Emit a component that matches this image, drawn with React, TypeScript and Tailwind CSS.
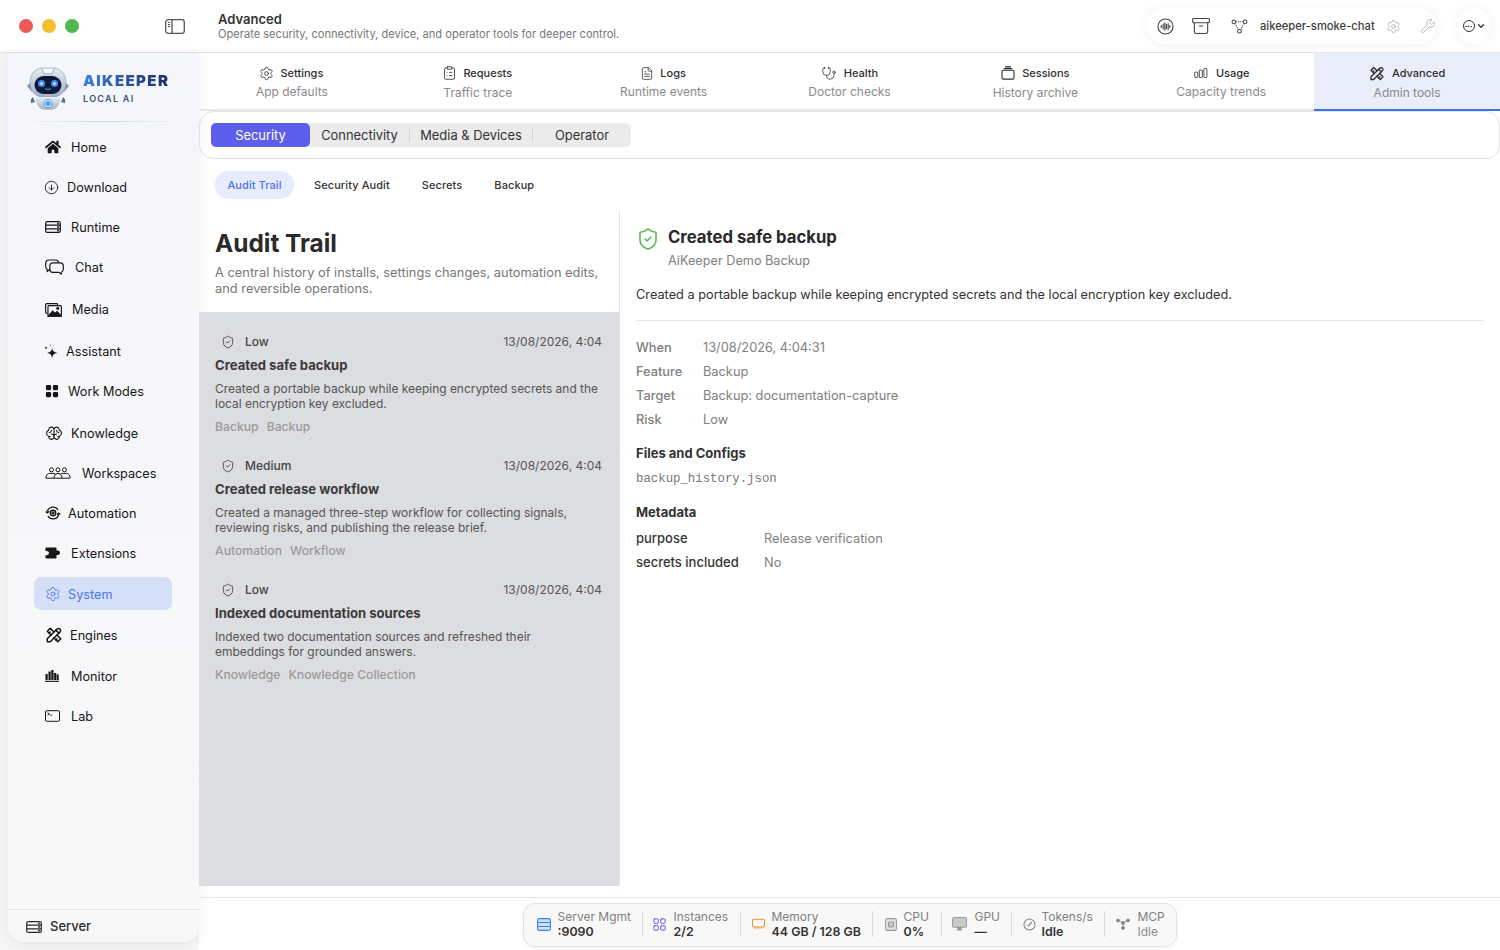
import React from 'react';
import {
  Settings,
  ClipboardList,
  FileText,
  Stethoscope,
  CircleArrowDown,
  ShieldCheck,
  Archive,
  Wrench,
  ChevronDown,
  Ellipsis,
  LayoutGrid,
} from 'lucide-react';
import { FaHome } from 'react-icons/fa';
import { BsGridFill } from 'react-icons/bs';
import { TbTools } from 'react-icons/tb';
import { PiBrain } from 'react-icons/pi';

type SvgProps = { className?: string };

const ServerIcon = ({ className }: SvgProps) => (
  <svg viewBox="0 0 16 12" className={className} fill="none" stroke="currentColor" strokeWidth="1.2">
    <rect x="0.7" y="0.7" width="14.6" height="10.6" rx="1.6" />
    <path d="M0.7 4.2h14.6M0.7 7.8h14.6" />
    <circle cx="13" cy="2.5" r="0.4" />
    <circle cx="13" cy="6" r="0.4" />
    <circle cx="13" cy="9.6" r="0.4" />
  </svg>
);

const ServerBlueIcon = ({ className }: SvgProps) => (
  <svg viewBox="0 0 14 13" className={className} fill="#cfe0fd" stroke="#3b82f6" strokeWidth="1.1">
    <rect x="0.6" y="0.6" width="12.8" height="11.8" rx="1.6" />
    <path d="M0.6 4.5h12.800M0.6 8.500h12.800" />
  </svg>
);

const ChatIcon = ({ className }: SvgProps) => (
  <svg viewBox="0 0 19 16" className={className} fill="none" stroke="currentColor" strokeWidth="1.200" strokeLinejoin="round">
    <path d="M5.500 10.800H4.200l-2 1.700v-2.300C1.100 9.700.7 8.800.7 7.600V4.300C.7 2.400 2 1 4 1h6.400c1.700 0 2.900 1 3.200 2.600" />
    <path d="M7.800 3.800h7.400c1.800 0 3.100 1.300 3.100 3v3.400c0 1.400-.7 2.500-2 3v2l-2.300-1.800H7.800c-1.800 0-3-1.300-3-3V6.800c0-1.700 1.200-3 3-3z" />
  </svg>
);

const MediaIcon = ({ className }: SvgProps) => (
  <svg viewBox="0 0 16 14" className={className} fill="none" stroke="currentColor" strokeWidth="1.1">
    <path d="M2.500 10.500H1.600a1 1 0 0 1-1-1.100V2.400a1 1 0 0 1 1-1h9.400a1 1 0 0 1 1 1v.7" />
    <rect x="2.800" y="3.300" width="12.600" height="10" rx="1" />
    <path d="M3 13.200 7.200 8.600l2.200 2.100 2-1.700 4 4.200z" fill="currentColor" />
    <circle cx="12" cy="5.800" r="0.900" fill="currentColor" />
  </svg>
);

const SparkIcon = ({ className }: SvgProps) => (
  <svg viewBox="1 0 12 13" className={className} fill="currentColor">
    <path d="M8 3.500c.4 2.600 1.400 3.600 4.400 4.200-3 .5-4 1.600-4.400 4.800-.4-3.200-1.400-4.300-4.400-4.800 3-.6 4-1.600 4.400-4.200z" />
    <path d="M2.700 1.800c.2 1 .5 1.300 1.300 1.500-.8.200-1.100.5-1.300 1.500-.2-1-.5-1.300-1.300-1.500.8-.2 1.100-.5 1.300-1.500z" />
    <path d="M6.500.2c.1.600.3.800.8.900-.5.100-.7.300-.8.900-.1-.6-.3-.8-.8-.9.500-.1.700-.3.800-.9z" />
  </svg>
);

const PeopleIcon = ({ className }: SvgProps) => (
  <svg viewBox="0 0 26 12" className={className} fill="none" stroke="currentColor" strokeWidth="1">
    <circle cx="6.500" cy="2.800" r="2" />
    <circle cx="13" cy="2.800" r="2" />
    <circle cx="19.500" cy="2.800" r="2" />
    <path d="M.8 11c0-3 2-4.600 4-4.600h3.400c1.400 0 2.400.6 3 1.600M9 11.200c0-3 1.800-4.800 4-4.800s4 1.800 4 4.800M14.800 8c.6-1 1.600-1.600 3-1.600h3.400c2 0 4 1.600 4 4.600" />
    <path d="M.8 11.200h24.400" />
  </svg>
);

const AutomationIcon = ({ className }: SvgProps) => (
  <svg viewBox="0 0 16 14" className={className} fill="none" stroke="currentColor" strokeWidth="1.300">
    <path d="M2.300 5.600A5.800 5.800 0 0 1 13 4M13.700 8.400A5.800 5.800 0 0 1 3 10" />
    <path d="M.6 5.400l1.800 1.500 1.600-1.600M15.400 8.600l-1.800-1.500L12 8.700" />
    <circle cx="8" cy="7" r="2.700" strokeWidth="1.500" />
    <circle cx="8" cy="7" r="0.800" fill="currentColor" />
  </svg>
);

const PuzzleIcon = ({ className }: SvgProps) => (
  <svg viewBox="0 0 16 12" className={className} fill="currentColor">
    <path d="M.5 1.200C.5.800.8.500 1.200.500h9.600c.4 0 .7.300.7.700v2.300h1.200a2.300 2.300 0 0 1 0 4.600h-1.200v2.700c0 .4-.3.700-.7.700H1.200a.7.700 0 0 1-.7-.7V8.200h1.400a2.100 2.100 0 0 0 0-4.200H.5z" />
  </svg>
);

const BarsIcon = ({ className }: SvgProps) => (
  <svg viewBox="0 0 14 12" className={className} fill="currentColor">
    <rect x="0.500" y="4" width="2.200" height="6" />
    <rect x="3.500" y="1.500" width="2.200" height="8.500" />
    <rect x="6.300" y="0" width="2.200" height="10" />
    <rect x="9.100" y="3" width="2.200" height="7" />
    <rect x="11.700" y="4.500" width="2" height="5.500" />
    <rect x="0" y="10.800" width="14" height="1.100" />
  </svg>
);

const TerminalIcon = ({ className }: SvgProps) => (
  <svg viewBox="0 0 15 12" className={className} fill="none" stroke="currentColor" strokeWidth="1">
    <rect x="0.500" y="0.700" width="14" height="10.600" rx="1.200" />
    <path d="M2.500 2.800 4.500 4 2.500 5.200M5.200 5.200h2" strokeWidth="0.900" />
  </svg>
);

const SessionsIcon = ({ className }: SvgProps) => (
  <svg viewBox="0 0 14 14" className={className} fill="none" stroke="currentColor" strokeWidth="1.100">
    <rect x="1" y="4.300" width="12" height="8.800" rx="1.300" />
    <path d="M2.800 2.600h8.400M4 .9h6" />
  </svg>
);

const UsageIcon = ({ className }: SvgProps) => (
  <svg viewBox="0 0 16 12" className={className} fill="none" stroke="currentColor" strokeWidth="1">
    <rect x="0.500" y="5" width="3.600" height="6.500" rx="0.600" />
    <rect x="6" y="2.500" width="3.600" height="9" rx="0.600" />
    <rect x="11.500" y="0.500" width="3.600" height="11" rx="0.600" />
  </svg>
);

const NodesIcon = ({ className }: SvgProps) => (
  <svg viewBox="0 0 18 16" className={className} fill="none" stroke="currentColor" strokeWidth="1.100">
    <circle cx="3" cy="3" r="2" />
    <circle cx="15" cy="3" r="2" />
    <circle cx="9" cy="13" r="2" />
    <path d="M5 3h8M4 4.800l4 6.400M14 4.800l-4 6.400" strokeDasharray="1.200 1.200" />
  </svg>
);

const McpIcon = ({ className }: SvgProps) => (
  <svg viewBox="0 0 14 12" className={className} fill="#808080" stroke="#808080" strokeWidth="0.800">
    <path d="M2 2.500 7 5v5M12 2.500 7 5" fill="none" />
    <circle cx="2" cy="2.500" r="1.400" />
    <circle cx="12" cy="2.500" r="1.400" />
    <circle cx="7" cy="5" r="1.400" />
    <circle cx="7" cy="10" r="1.400" />
  </svg>
);

const MemoryIcon = ({ className }: SvgProps) => (
  <svg viewBox="0 0 14 12" className={className} fill="none" stroke="#f08a2c" strokeWidth="1.100">
    <rect x="0.600" y="0.800" width="12.800" height="8.400" rx="1.400" />
    <path d="M2.500 9.500v2M4.500 9.500v2M6.500 9.500v2M8.500 9.500v2M10.500 9.500v2" strokeWidth="0.700" />
  </svg>
);

const CpuIcon = ({ className }: SvgProps) => (
  <svg viewBox="0 0 12 13" className={className} fill="none" stroke="#9a9a9a" strokeWidth="1.100">
    <rect x="0.600" y="0.600" width="10.800" height="11.800" rx="2" fill="#e4e4e4" />
    <rect x="3.500" y="4" width="5" height="5" rx="1" fill="#c8c8c8" />
  </svg>
);

const GpuIcon = ({ className }: SvgProps) => (
  <svg viewBox="0 0 15 14" className={className} fill="#9d9d9d" stroke="#8a8a8a" strokeWidth="0.800">
    <rect x="0.500" y="0.500" width="14" height="9.800" rx="1" fill="#c9c9c9" />
    <rect x="6" y="10.500" width="3" height="2" />
    <path d="M4.500 13h6" />
  </svg>
);

const DialIcon = ({ className }: SvgProps) => (
  <svg viewBox="0 0 14 14" className={className} fill="none" stroke="#808080" strokeWidth="1.100">
    <circle cx="7" cy="7" r="6" />
    <path d="M5.500 9 9.500 4.500" strokeWidth="1.300" />
    <path d="M3.300 7.500h.8M7 3h.1" />
  </svg>
);

const WaveIcon = ({ className }: SvgProps) => (
  <svg viewBox="0 0 18 18" className={className} fill="none" stroke="currentColor" strokeWidth="1.200" strokeLinecap="round">
    <circle cx="9" cy="9" r="8" />
    <path d="M4.500 8v2M6.500 6.500v5M8.300 5v8M10 7v4M11.800 5.800v6.400M13.600 8v2" />
  </svg>
);

const SidebarToggle = ({ className }: SvgProps) => (
  <svg viewBox="0 0 20 15" className={className} fill="none" stroke="currentColor" strokeWidth="1.300">
    <rect x="0.700" y="0.700" width="18.600" height="13.600" rx="2.500" />
    <path d="M7 .7v13.600" />
    <path d="M3 3.500h2M3 5.500h2M3 7.500h2" strokeWidth="1" />
  </svg>
);

const RobotLogo = ({ className }: SvgProps) => (
  <svg viewBox="0 0 44 46" className={className}>
    <defs>
      <linearGradient id="shell" x1="0" y1="0" x2="0" y2="1">
        <stop offset="0" stopColor="#e8edf5" />
        <stop offset="1" stopColor="#9fb0c8" />
      </linearGradient>
    </defs>
    <path d="M6 16 1 21l5 6z" fill="#8494ad" />
    <path d="M38 16l5 5-5 6z" fill="#8494ad" />
    <rect x="4" y="3" width="36" height="29" rx="13" fill="url(#shell)" stroke="#7c8ca6" strokeWidth="0.500" />
    <path d="M16 4l2 5h8l2-5" fill="#f6f8fb" stroke="#8494ad" strokeWidth="0.800" />
    <rect x="8.500" y="11" width="27" height="18" rx="9" fill="#101a33" />
    <circle cx="15.500" cy="18.500" r="3.500" fill="#3f8cff" />
    <circle cx="28.500" cy="18.500" r="3.500" fill="#3f8cff" />
    <circle cx="15.500" cy="18.500" r="1.500" fill="#bfe0ff" />
    <circle cx="28.500" cy="18.500" r="1.500" fill="#bfe0ff" />
    <path d="M19 23.500q3 2.500 6 0" stroke="#4ea0ff" strokeWidth="1" fill="none" />
    <path d="M7 32q-3 2-2 6l4-1zM37 32q3 2 2 6l-4-1z" fill="#5d6f8c" />
    <path d="M10 32h24q1 13-12 13T10 32z" fill="url(#shell)" />
    <circle cx="22" cy="38.500" r="4.200" fill="#dbeafe" stroke="#6e8fc0" />
    <circle cx="22" cy="38.500" r="2.500" fill="#38a5f8" />
  </svg>
);

const navItems = [
  { label: 'Home', icon: <FaHome className="h-[16px] w-[16px]" />, box: 'w-[26px]', row: '' },
  { label: 'Download', icon: <CircleArrowDown strokeWidth={1.4} className="-ml-[1px] h-[15px] w-[15px]" />, box: 'w-[22px]', row: '' },
  { label: 'Runtime', icon: <ServerIcon className="h-[12px] w-[16px]" />, box: 'w-[26px]', row: '' },
  { label: 'Chat', icon: <ChatIcon className="h-[16px] w-[19px]" />, box: 'w-[30px]', row: '' },
  { label: 'Media', icon: <MediaIcon className="h-[15px] w-[17px]" />, box: 'w-[27px]', row: 'mt-[2px]' },
  { label: 'Assistant', icon: <SparkIcon className="-ml-[1px] h-[15px] w-[14px]" />, box: 'w-[21px]', row: 'mt-[2px]' },
  { label: 'Work Modes', icon: <BsGridFill className="h-[14px] w-[14px]" />, box: 'w-[23px]', row: '' },
  { label: 'Knowledge', icon: <PiBrain className="h-[17px] w-[18px]" />, box: 'w-[26px]', row: 'mt-[2px]' },
  { label: 'Workspaces', icon: <PeopleIcon className="h-[12px] w-[26px]" />, box: 'w-[37px]', row: '' },
  { label: 'Automation', icon: <AutomationIcon className="h-[14px] w-[16px]" />, box: 'w-[23px]', row: '' },
  { label: 'Extensions', icon: <PuzzleIcon className="h-[12px] w-[16px]" />, box: 'w-[26px]', row: '' },
  { label: 'System', icon: <Settings strokeWidth={1.3} className="h-[16px] w-[16px]" />, box: 'w-[23px]', row: 'mt-[1px]', active: true },
  { label: 'Engines', icon: <TbTools className="h-[18px] w-[18px]" />, box: 'w-[25px]', row: 'mt-[1px]' },
  { label: 'Monitor', icon: <BarsIcon className="h-[12px] w-[14px]" />, box: 'w-[26px]', row: 'mt-[1px]' },
  { label: 'Lab', icon: <TerminalIcon className="h-[12px] w-[15px]" />, box: 'w-[26px]', row: '' },
];

const topTabs = [
  { label: 'Settings', sub: 'App defaults', icon: <Settings strokeWidth={1.3} className="-mx-[1px] h-[15px] w-[15px]" /> },
  { label: 'Requests', sub: 'Traffic trace', icon: <ClipboardList strokeWidth={1.3} className="-mx-[1px] h-[16px] w-[15px]" />, low: true },
  { label: 'Logs', sub: 'Runtime events', icon: <FileText strokeWidth={1.3} className="-mx-[1px] h-[15px] w-[14px]" /> },
  { label: 'Health', sub: 'Doctor checks', icon: <Stethoscope strokeWidth={1.2} className="h-[15px] w-[16px]" /> },
  { label: 'Sessions', sub: 'History archive', icon: <SessionsIcon className="h-[14px] w-[14px]" />, low: true },
  { label: 'Usage', sub: 'Capacity trends', icon: <UsageIcon className="h-[10px] w-[16px]" /> },
  { label: 'Advanced', sub: 'Admin tools', icon: <TbTools className="h-[17px] w-[16px]" />, active: true, low: true },
];

const auditEvents = [
  {
    risk: 'Low',
    title: 'Created safe backup',
    desc: 'Created a portable backup while keeping encrypted secrets and the local encryption key excluded.',
    tags: ['Backup', 'Backup'],
  },
  {
    risk: 'Medium',
    title: 'Created release workflow',
    desc: 'Created a managed three-step workflow for collecting signals, reviewing risks, and publishing the release brief.',
    tags: ['Automation', 'Workflow'],
  },
  {
    risk: 'Low',
    title: 'Indexed documentation sources',
    desc: 'Indexed two documentation sources and refreshed their embeddings for grounded answers.',
    tags: ['Knowledge', 'Knowledge Collection'],
  },
];

const details = [
  ['When', '13/08/2026, 4:04:31'],
  ['Feature', 'Backup'],
  ['Target', 'Backup: documentation-capture'],
  ['Risk', 'Low'],
];

const statusItems = [
  { label: 'Server Mgmt', value: ':9090', icon: <ServerBlueIcon className="h-[13px] w-[14px]" />, cls: 'w-[119px] pl-[13px] gap-[7px]' },
  { label: 'Instances', value: '2/2', icon: <LayoutGrid strokeWidth={1.4} className="h-[15px] w-[15px] text-[#4f46e5]" />, cls: 'w-[98px] pl-[9px] gap-[7px]' },
  { label: 'Memory', value: '44 GB / 128 GB', icon: <MemoryIcon className="h-[12px] w-[13px]" />, cls: 'w-[132px] pl-[11px] gap-[7px]' },
  { label: 'CPU', value: '0%', icon: <CpuIcon className="h-[13px] w-[12px]" />, cls: 'w-[69px] pl-[12px] gap-[7px]' },
  { label: 'GPU', value: '—', icon: <GpuIcon className="h-[14px] w-[15px]" />, cls: 'w-[70px] pl-[10px] gap-[8px]' },
  { label: 'Tokens/s', value: 'Idle', icon: <DialIcon className="h-[13px] w-[13px]" />, cls: 'w-[93px] pl-[11px] gap-[6px]' },
  { label: 'MCP', value: 'Idle', icon: <McpIcon className="h-[12px] w-[14px]" />, cls: 'pl-[11px] gap-[8px]', muted: true },
];

const NavRow = ({ item }: { item: (typeof navItems)[number] }) => (
  <div className={`flex h-[40px] shrink-0 items-center ${item.row}`}>
    <div
      className={`flex h-[33px] w-[138px] items-center rounded-[7px] pl-[11px] ${
        item.active ? 'mb-[2px] bg-[#d5e0f7] pt-[2px] text-[#4a74f0]' : 'text-[#161616]'
      }`}
    >
      <span className={`flex shrink-0 items-center ${item.box}`}>{item.icon}</span>
      <span className="pt-[1px] text-[12.7px] leading-[14px]">{item.label}</span>
    </div>
  </div>
);

const Sidebar = () => (
  <div className="w-[199px] shrink-0 bg-[#f6f6f6] pl-2 pb-2">
    <aside className="flex h-full flex-col rounded-b-[16px] bg-gradient-to-b from-[#f5f6fb] to-[#f8f8f8] shadow-[0_2px_14px_rgba(0,0,0,0.07)]">
      <div className="flex h-[68px] shrink-0 items-center gap-[13px] pl-[18px] pt-[2px]">
        <RobotLogo className="h-[46px] w-[44px]" />
        <div className="flex flex-col">
          <span className="bg-gradient-to-r from-[#3b7ddd] to-[#1b2f66] bg-clip-text text-[15px] font-black leading-[19px] tracking-[1.4px] text-transparent">
            AIKEEPER
          </span>
          <span className="mt-[3px] text-[9px] font-semibold leading-[12px] tracking-[1.3px] text-[#3d5078]">LOCAL AI</span>
        </div>
      </div>
      <div className="mx-[14px] h-px shrink-0 bg-gradient-to-r from-transparent via-[#cfd6e2] to-transparent" />
      <nav className="flex flex-1 flex-col pl-[26px] pt-[5px]">
        {navItems.map(item => (
          <NavRow key={item.label} item={item} />
        ))}
      </nav>
      <div className="flex h-[33px] shrink-0 items-center gap-[8px] border-t border-[#e3e3e3] pl-[18px] pt-[1px]">
        <ServerIcon className="h-[12px] w-[16px] text-[#2a2a2a]" />
        <span className="text-[13px] font-medium text-[#2a2a2a]">Server</span>
      </div>
    </aside>
  </div>
);

const Header = () => (
  <header className="flex h-[53px] shrink-0 items-center border-b border-[#e3e3e3] bg-white pl-[19px] pr-[10px]">
    <div className="flex items-center gap-[9px]">
      <span className="h-[14px] w-[14px] rounded-full bg-[#ee5a55]" />
      <span className="h-[14px] w-[14px] rounded-full bg-[#f2bf2d]" />
      <span className="h-[14px] w-[14px] rounded-full bg-[#4fb84f]" />
    </div>
    <SidebarToggle className="ml-[86px] h-[15px] w-[20px] text-[#555]" />
    <div className="ml-[33px] flex flex-col">
      <span className="mt-[1px] text-[13px] font-semibold leading-[15px] text-[#333]">Advanced</span>
      <span className="text-[11.1px] leading-[14px] text-[#777]">Operate security, connectivity, device, and operator tools for deeper control.</span>
    </div>
    <div className="ml-auto flex h-[36px] w-[289px] items-center rounded-[18px] bg-white pl-[10px] shadow-[0_0_14px_rgba(0,0,0,0.06)]">
      <WaveIcon className="h-[17px] w-[17px] text-[#444]" />
      <Archive strokeWidth={1.3} className="ml-[17px] h-[20px] w-[20px] text-[#444]" />
      <NodesIcon className="ml-[19px] h-[15px] w-[19px] text-[#444]" />
      <span className="ml-[11px] text-[11.2px] font-medium text-[#3c3c3c]">aikeeper-smoke-chat</span>
      <Settings strokeWidth={1.1} className="ml-[11px] h-[15px] w-[15px] text-[#a0a0a0]" />
      <Wrench strokeWidth={1.1} className="ml-[19px] h-[16px] w-[16px] text-[#a0a0a0]" />
    </div>
    <div className="ml-[22px] flex h-[36px] w-[32px] items-center justify-center rounded-[18px] bg-white shadow-[0_0_14px_rgba(0,0,0,0.06)]">
      <span className="flex h-[12px] w-[12px] items-center justify-center rounded-full border border-[#333]">
        <Ellipsis strokeWidth={2} className="h-[9px] w-[9px] text-[#333]" />
      </span>
      <ChevronDown strokeWidth={3} className="ml-[1px] h-[10px] w-[10px] text-[#333]" />
    </div>
  </header>
);

const TopTabs = () => (
  <div className="flex h-[58px] shrink-0 border-b-2 border-[#e6e6e6]">
    {topTabs.map(tab => (
      <div
        key={tab.label}
        className={`flex flex-1 flex-col items-center pt-[11px] ${
          tab.active ? 'mb-[-2px] border-b-2 border-[#3b74ea] bg-[#e9eefa]' : ''
        }`}
      >
        <div className="flex h-[18px] items-center gap-[7px] text-[#2e2e2e]">
          {tab.icon}
          <span className="text-[11px] font-medium">{tab.label}</span>
        </div>
        <span className={`text-[12px] leading-[16px] text-[#8a8a8a] ${tab.low ? 'mt-[3px]' : 'mt-[2px]'}`}>{tab.sub}</span>
      </div>
    ))}
  </div>
);

const SubNav = () => (
  <>
    <div className="flex h-[48px] shrink-0 items-center rounded-[14px] border border-[#e3e3e3] pl-[11px]">
      <div className="flex h-[24px] items-center rounded-[6px] bg-[#ebebeb] text-[12.9px] text-[#333]">
        <div className="flex h-[24px] w-[99px] items-center justify-center rounded-[5px] bg-[#5b5fec] pt-[1px] text-white">Security</div>
        <div className="flex h-[24px] w-[99px] items-center justify-center pt-[1px]">Connectivity</div>
        <span className="h-[14px] w-px bg-[#d4d4d4]" />
        <div className="flex h-[24px] w-[122px] items-center justify-center pt-[1px]">Media &amp; Devices</div>
        <span className="h-[14px] w-px bg-[#d4d4d4]" />
        <div className="flex h-[24px] w-[98px] items-center justify-center pt-[1px]">Operator</div>
      </div>
    </div>
    <div className="flex h-[52px] shrink-0 items-center pl-[16px] text-[11px] font-medium tracking-[0.08px] text-[#333]">
      <span className="flex h-[28px] w-[79px] items-center justify-center rounded-[14px] bg-[#e6ecfb] text-[#4a74f0]">Audit Trail</span>
      <span className="ml-[20px]">Security Audit</span>
      <span className="ml-[32px]">Secrets</span>
      <span className="ml-[32px]">Backup</span>
    </div>
  </>
);

const AuditList = () => (
  <div className="flex w-[421px] shrink-0 flex-col border-r border-[#e3e3e3]">
    <div className="h-[101px] shrink-0 px-[16px] pt-[16px]">
      <h1 className="text-[24.4px] font-bold leading-[32px] text-[#2a2a2a]">Audit Trail</h1>
      <p className="mt-[6px] text-[12.85px] leading-[16px] text-[#777]">
        A central history of installs, settings changes, automation edits, and reversible operations.
      </p>
    </div>
    <div className="flex-1 bg-[#dcdde0] pt-[8px]">
      {auditEvents.map(ev => (
        <div key={ev.title} className="h-[124px] pl-[16px] pr-[17px] pt-[13px]">
          <div className="flex h-[18px] items-center text-[12px]">
            <ShieldCheck strokeWidth={1.5} className="ml-[6px] h-[14px] w-[14px] text-[#444]" />
            <span className="ml-[10px] font-medium text-[#444]">{ev.risk}</span>
            <span className="ml-auto text-[#555]">13/08/2026, 4:04</span>
          </div>
          <div className="mt-[5px] text-[13.1px] font-bold leading-[18px] text-[#3a3a3a]">{ev.title}</div>
          <p className="mt-[7px] text-[11.95px] leading-[15px] text-[#555]">{ev.desc}</p>
          <div className="mt-[7px] flex h-[18px] items-center gap-[8px] text-[12.2px] font-medium text-[#9a9a9a]">
            {ev.tags.map((tag, i) => (
              <span key={i}>{tag}</span>
            ))}
          </div>
        </div>
      ))}
    </div>
  </div>
);

const DetailPane = () => (
  <div className="flex-1 pl-[16px] pr-[16px] pt-[15px]">
    <div className="flex items-start">
      <ShieldCheck strokeWidth={1.6} className="mt-[1px] h-[24px] w-[24px] text-[#58b85c]" />
      <div className="ml-[8px]">
        <h2 className="text-[16.7px] font-bold leading-[22px] text-[#2a2a2a]">Created safe backup</h2>
        <p className="mt-[3px] text-[12.7px] leading-[20px] text-[#808080]">AiKeeper Demo Backup</p>
      </div>
    </div>
    <p className="mt-[15px] text-[12.76px] leading-[18px] text-[#333]">
      Created a portable backup while keeping encrypted secrets and the local encryption key excluded.
    </p>
    <div className="mt-[16px] h-px bg-[#e3e3e3]" />
    <div className="mt-[15px] flex flex-col text-[12.8px]">
      {details.map(([k, v]) => (
        <div key={k} className="flex h-[24px] items-center">
          <span className="w-[67px] font-medium text-[#808080]">{k}</span>
          <span className="text-[#808080]">{v}</span>
        </div>
      ))}
    </div>
    <h3 className="mt-[12px] text-[13px] font-bold leading-[18px] text-[#333]">Files and Configs</h3>
    <p className="mt-[8px] font-['Liberation_Mono',monospace] text-[12.35px] leading-[18px] text-[#777]">backup_history.json</p>
    <h3 className="mt-[15px] text-[13px] font-bold leading-[18px] text-[#333]">Metadata</h3>
    <div className="mt-[6px] flex h-[24px] items-center text-[12.8px]">
      <span className="w-[128px] text-[13px] font-medium text-[#333]">purpose</span>
      <span className="text-[#808080]">Release verification</span>
    </div>
    <div className="flex h-[24px] items-center text-[12.8px]">
      <span className="w-[128px] text-[13px] font-medium text-[#333]">secrets included</span>
      <span className="text-[#808080]">No</span>
    </div>
  </div>
);

const StatusBar = () => (
  <footer className="flex h-[53px] shrink-0 justify-center border-t border-[#e6e6e6] pt-[5px]">
    <div className="flex h-[44px] w-[654px] items-center rounded-[12px] border border-[#e3e3e3] bg-[#f8f8f8] pb-[2px] shadow-[0_1px_4px_rgba(0,0,0,0.05)]">
      {statusItems.map((s, i) => (
        <div
          key={s.label}
          className={`flex h-[26px] items-center ${s.cls} ${i < statusItems.length - 1 ? 'border-r border-[#dcdcdc]' : ''}`}
        >
          {s.icon}
          <div className="flex flex-col text-[12px] leading-[15px]">
            <span className="text-[#808080]">{s.label}</span>
            <span className={s.muted ? 'text-[#8a8a8a]' : 'text-[12.4px] font-semibold text-[#333]'}>{s.value}</span>
          </div>
        </div>
      ))}
    </div>
  </footer>
);

export default function App() {
  return (
    <div className="flex h-[950px] w-[1500px] flex-col overflow-hidden bg-white font-['Inter','Noto_Sans',sans-serif]">
      <Header />
      <div className="flex min-h-0 flex-1">
        <Sidebar />
        <main className="flex min-w-0 flex-1 flex-col">
          <TopTabs />
          <SubNav />
          <div className="flex min-h-0 flex-1 pb-[11px]">
            <AuditList />
            <DetailPane />
          </div>
          <StatusBar />
        </main>
      </div>
    </div>
  );
}
